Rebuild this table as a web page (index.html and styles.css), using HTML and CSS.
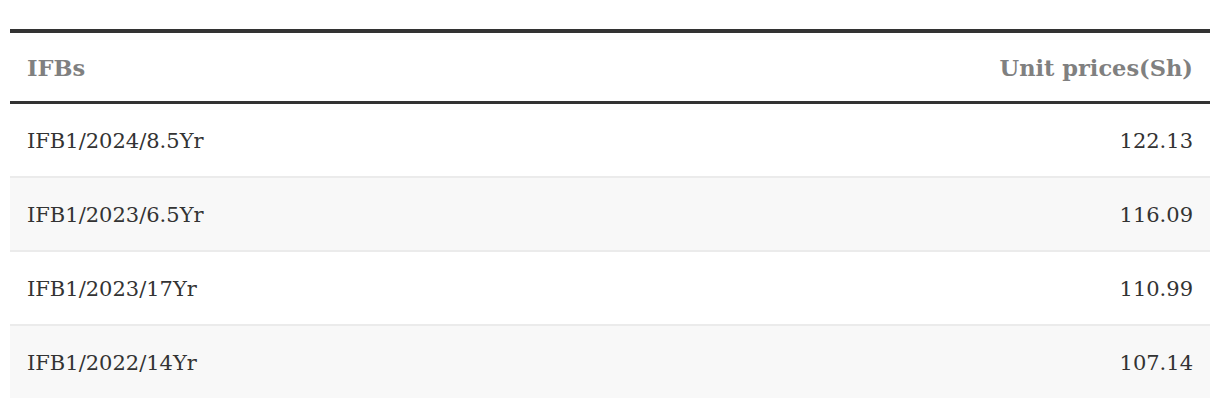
FILE: index.html
```html
<!DOCTYPE html>
<html>
<head>
<meta charset="utf-8">
<link rel="stylesheet" href="styles.css">
</head>
<body>
<div class="wrap">
<table class="prices">
  <thead>
    <tr><th class="name">IFBs</th><th class="val">Unit prices(Sh)</th></tr>
  </thead>
  <tbody>
    <tr><td class="name">IFB1/2024/8.5Yr</td><td class="val">122.13</td></tr>
    <tr class="alt"><td class="name">IFB1/2023/6.5Yr</td><td class="val">116.09</td></tr>
    <tr><td class="name">IFB1/2023/17Yr</td><td class="val">110.99</td></tr>
    <tr class="alt"><td class="name">IFB1/2022/14Yr</td><td class="val">107.14</td></tr>
  </tbody>
</table>
</div>
</body>
</html>
```
FILE: styles.css
```css
html, body { margin: 0; padding: 0; background: #fff; }
.wrap { padding: 29px 10px 0 10px; }
.prices {
  width: 100%;
  border-collapse: collapse;
  font-family: "DejaVu Serif", "Liberation Serif", serif;
  color: #333;
}
.prices thead tr { border-top: 4px solid #333; border-bottom: 3px solid #333; }
.prices th {
  height: 66px;
  padding: 2px 17px 0 17px;
  font-size: 22.5px;
  font-weight: bold;
  color: #808080;
  text-align: left;
  vertical-align: middle;
}
.prices td {
  height: 70px;
  padding: 2px 17px 0 17px;
  font-size: 21px;
  vertical-align: middle;
}
.prices tbody tr { border-bottom: 2px solid #ebebeb; }
.prices tbody tr:last-child { border-bottom: none; }
.prices tr.alt { background: #f8f8f8; }
.prices .val { text-align: right; }
```
